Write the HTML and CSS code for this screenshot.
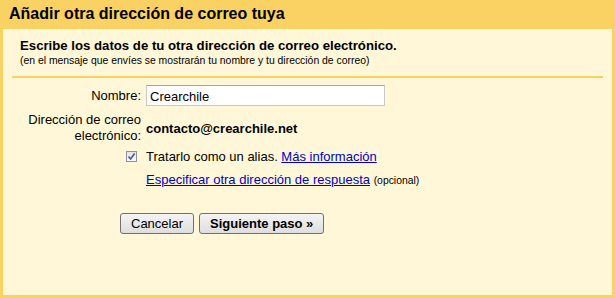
FILE: index.html
```html
<!DOCTYPE html>
<html lang="es">
<head>
<meta charset="UTF-8" />
<title>Añadir otra dirección de correo tuya</title>
<link rel="stylesheet" href="styles.css">
</head>
<body>

<div class="box">
  <div class="box-title">Añadir otra dirección de correo tuya</div>
  <div class="box-body">
    <div class="intro">
      <div class="intro-head">Escribe los datos de tu otra dirección de correo electrónico.</div>
      <div class="intro-note">(en el mensaje que envíes se mostrarán tu nombre y tu dirección de correo)</div>
    </div>

    <div class="form">
      <label class="lbl lbl-name" for="name">Nombre:</label>
      <div class="val"><input id="name" class="txt" type="text" value="Crearchile"></div>

      <div class="lbl lbl-mail">Dirección de correo electrónico:</div>
      <div class="val mail">contacto@crearchile.net</div>

      <div class="lbl chk-cell"><span class="chk"><svg width="9" height="9" viewBox="0 0 9 9"><path d="M1.5 4.5 L3.6 7 L7.6 1.5" fill="none" stroke="#3c5a9a" stroke-width="1.6"/></svg></span></div>
      <div class="val">Tratarlo como un alias. <a href="#">Más información</a></div>

      <div class="lbl"></div>
      <div class="val reply"><a href="#">Especificar otra dirección de respuesta</a> <span class="opt">(opcional)</span></div>

      <div class="lbl"></div>
      <div class="val buttons">
        <button class="btn">Cancelar</button>
        <button class="btn btn-main">Siguiente paso »</button>
      </div>
    </div>
  </div>
</div>

</body>
</html>
```

FILE: styles.css
```css
body {
  margin: 0;
  padding: 0;
  background: #fff;
  font-family: "Liberation Sans", Arial, sans-serif;
  font-size: 13px;
  color: #000;
}
.box {
  width: 615px;
  height: 298px;
  box-sizing: border-box;
  background: #fad163;
  padding: 0 3px 3px 3px;
  display: flex;
  flex-direction: column;
}
.box-title {
  height: 29px;
  box-sizing: border-box;
  padding: 5px 0 0 6px;
  font-size: 16px;
  font-weight: bold;
  line-height: 18px;
}
.box-body {
  flex: 1;
  background: #fff7d7;
}
.intro {
  margin: 0 9px;
  padding: 9px 8px 9px 8px;
  border-bottom: 2px solid #fad163;
}
.intro-head {
  font-weight: bold;
  font-size: 13.2px;
  line-height: 15px;
}
.intro-note {
  font-size: 10.4px;
  line-height: 13px;
  margin-top: 1px;
}
.form {
  display: grid;
  grid-template-columns: 138px 1fr;
  column-gap: 5px;
  margin-top: 7px;
  align-items: start;
}
.lbl {
  text-align: right;
  line-height: 16px;
}
.lbl-name {
  padding-top: 3px;
}
.val {
  line-height: 16px;
}
.txt {
  width: 239px;
  height: 21px;
  box-sizing: border-box;
  margin: 0;
  padding: 1px 3px 0 3px;
  border: 1px solid #c8c8c8;
  border-top-color: #a4a4a4;
  font-family: "Liberation Sans", Arial, sans-serif;
  font-size: 13px;
  background: #fff;
}
.lbl-mail {
  margin-top: 6px;
  padding-left: 20px;
}
.mail {
  font-weight: bold;
  margin-top: 15px;
}
.chk-cell {
  margin-top: 5px;
  display: flex;
  justify-content: flex-end;
  padding-right: 4px;
}
.chk-cell + .val {
  margin-top: 5px;
}
.chk {
  width: 11px;
  height: 11px;
  box-sizing: border-box;
  border: 1px solid #8f8f9d;
  background: linear-gradient(#e3e3e8, #fafafa);
  display: flex;
  align-items: center;
  justify-content: center;
  margin-top: 2px;
}
a {
  color: #0000cc;
  text-decoration: underline;
}
.reply {
  margin-top: 7px;
}
.opt {
  font-size: 10.4px;
}
.buttons {
  margin-top: 24px;
  margin-left: -26px;
  display: flex;
  gap: 5px;
}
.btn {
  font-family: "Liberation Sans", Arial, sans-serif;
  font-size: 13px;
  height: 21px;
  padding: 0 10px;
  border: 1px solid #707070;
  border-radius: 3px;
  background: linear-gradient(#f4f4f4, #dedede);
  color: #000;
}
.btn-main {
  font-weight: bold;
  padding: 0 10px;
}
```
